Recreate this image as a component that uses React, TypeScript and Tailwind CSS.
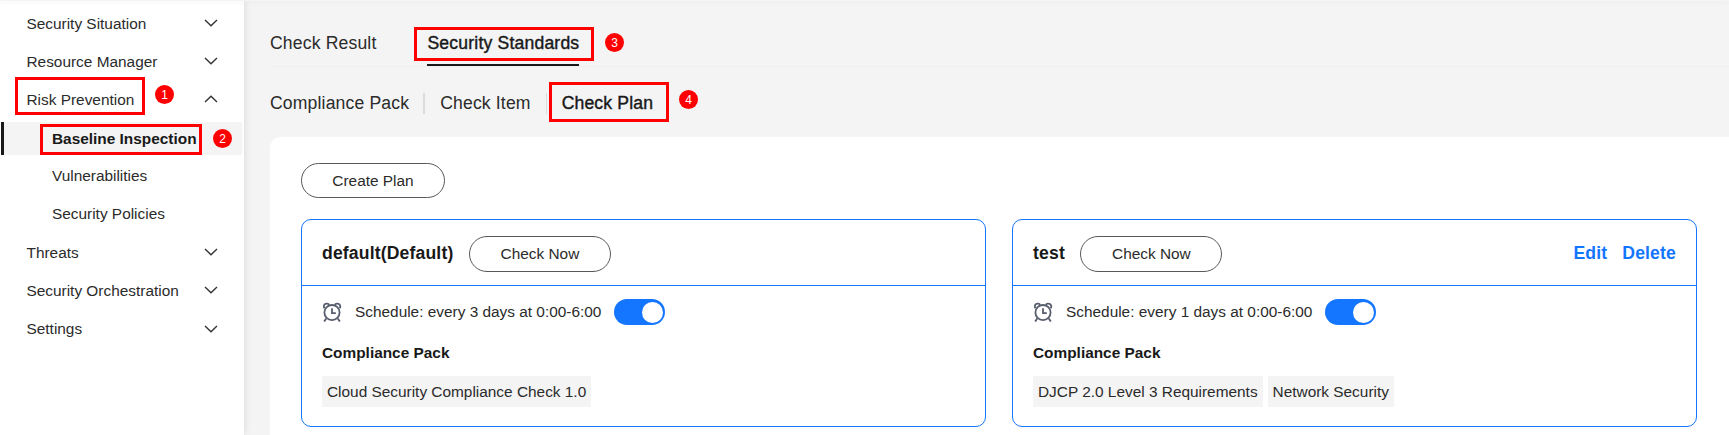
import clsx from "clsx";

type MenuItem = {
  label: string;
  open?: boolean;
  children?: string[];
};

type Plan = {
  name: string;
  schedule: string;
  packs: string[];
  editable?: boolean;
};

const menu: MenuItem[] = [
  { label: "Security Situation" },
  { label: "Resource Manager" },
  {
    label: "Risk Prevention",
    open: true,
    children: ["Baseline Inspection", "Vulnerabilities", "Security Policies"],
  },
  { label: "Threats" },
  { label: "Security Orchestration" },
  { label: "Settings" },
];

const plans: Plan[] = [
  {
    name: "default(Default)",
    schedule: "Schedule: every 3 days at 0:00-6:00",
    packs: ["Cloud Security Compliance Check 1.0"],
  },
  {
    name: "test",
    schedule: "Schedule: every 1 days at 0:00-6:00",
    packs: ["DJCP 2.0 Level 3 Requirements", "Network Security"],
    editable: true,
  },
];

function Chevron({ open }: { open?: boolean }) {
  return (
    <svg
      className={clsx("h-[8px] w-[14px]", open && "rotate-180")}
      viewBox="0 0 14 8"
      fill="none"
      stroke="#333"
      strokeWidth="1.4"
    >
      <path d="M1 1l6 5.8L13 1" />
    </svg>
  );
}

function AlarmClock() {
  return (
    <svg
      className="h-[20px] w-[20px]"
      viewBox="0 0 20 20"
      fill="none"
      stroke="#575d6c"
      strokeWidth="1.8"
    >
      <circle cx="10" cy="10.6" r="7.6" />
      <path d="M10 6.2v5h3.8" />
      <path d="M2.4 6.2A2.8 2.8 0 1 1 7.2 2.8" />
      <path d="M17.6 6.2A2.8 2.8 0 1 0 12.8 2.8" />
      <path d="M4.2 16.4l-2 3.2M15.8 16.4l2 3.2" />
    </svg>
  );
}

function Sidebar() {
  return (
    <nav className="z-10 w-[244px] shrink-0 bg-white pt-[3px] text-[15.4px] shadow-[0_0_8px_rgba(0,0,0,0.12)]">
      {menu.map((item) => (
        <div key={item.label}>
          <div className="flex h-[38.2px] items-center justify-between pr-[26px] pl-[26.5px]">
            <span>{item.label}</span>
            <Chevron open={item.open} />
          </div>
          {item.children?.map((child, i) => (
            <div key={child} className="flex h-[38.2px] items-center">
              <div
                className={clsx(
                  "ml-px flex h-[33px] w-[241px] items-center border-l-3 pl-[48px]",
                  i === 0
                    ? "mt-px border-[#191919] bg-[#f4f4f4] font-bold text-[#191919]"
                    : "border-transparent",
                )}
              >
                {child}
              </div>
            </div>
          ))}
        </div>
      ))}
    </nav>
  );
}

function PillButton({
  children,
  className,
}: {
  children: string;
  className: string;
}) {
  return (
    <button
      className={clsx(
        "rounded-full border border-[#595959] text-[15.4px] tracking-normal whitespace-nowrap",
        className,
      )}
    >
      {children}
    </button>
  );
}

function PlanCard({ plan }: { plan: Plan }) {
  return (
    <section className="h-[208px] w-[685px] rounded-[10px] border border-[#1476ff]">
      <header className="flex h-[66px] items-center border-b border-[#1476ff] px-[20px] pt-px text-[17.6px] font-bold tracking-[0.15px] text-[#191919]">
        <h2 className="mr-[15.5px]">{plan.name}</h2>
        <div className="mt-[2px] flex font-normal text-[#2b2b2b]">
          <PillButton className="h-[36px] w-[142px]">Check Now</PillButton>
        </div>
        {plan.editable && (
          <div className="ml-auto flex gap-[15px] text-[#1476ff]">
            <a>Edit</a>
            <a>Delete</a>
          </div>
        )}
      </header>
      <div className="px-[20px] pt-[13px] text-[15.4px] tracking-normal">
        <div className="flex h-[26px] items-center">
          <AlarmClock />
          <span className="ml-[13px]">{plan.schedule}</span>
          <span className="ml-[13px] flex h-[26px] w-[51px] items-center justify-end rounded-full bg-[#1476ff] pr-[2px]">
            <span className="h-[21px] w-[21px] rounded-full bg-white" />
          </span>
        </div>
        <h3 className="mt-[16px] leading-[24px] font-bold text-[#191919]">
          Compliance Pack
        </h3>
        <div className="mt-[11px] flex gap-[5px]">
          {plan.packs.map((pack) => (
            <span
              key={pack}
              className="flex h-[31px] items-center bg-[#f4f4f4] px-[5px] whitespace-nowrap"
            >
              {pack}
            </span>
          ))}
        </div>
      </div>
    </section>
  );
}

function Step({ n, className }: { n: number; className: string }) {
  return (
    <span
      className={clsx(
        "absolute z-20 flex h-[19px] w-[19px] items-center justify-center rounded-full bg-[#fe0000] text-[12px] leading-none text-white",
        className,
      )}
    >
      {n}
    </span>
  );
}

function Outline({ className }: { className: string }) {
  return (
    <span
      className={clsx("absolute z-20 border-3 border-[#fe0000]", className)}
    />
  );
}

export default function App() {
  return (
    <div className="relative flex h-[435px] w-[1729px] flex-col overflow-hidden bg-[#f4f4f4] font-['Liberation_Sans',Arial,sans-serif] text-[#2b2b2b]">
      <div className="z-20 h-px shrink-0 bg-[#f4f4f4] shadow-[0_1px_5px_rgba(0,0,0,0.12)]" />
      <div className="flex flex-1">
        <Sidebar />
        <main className="flex flex-1 flex-col pl-[26px] text-[17.6px] tracking-[0.15px]">
          <div className="flex h-[66px] items-end gap-[51px] border-b border-[#eeeeee]">
            <span className="h-[36px]">Check Result</span>
            <span className="h-[36px] border-b-2 border-[#191919] tracking-[0.18px] text-[#191919] [-webkit-text-stroke:0.4px]">
              Security Standards
            </span>
          </div>
          <div className="flex h-[70px] items-center pt-[3px]">
            <span>Compliance Pack</span>
            <span className="mr-[15px] ml-[14px] h-[21px] w-[2px] bg-[#dcdcdc]" />
            <span>Check Item</span>
            <span className="mr-[15px] ml-[15px] h-[21px] w-px bg-[#dcdcdc]" />
            <span className="text-[#191919] [-webkit-text-stroke:0.4px]">
              Check Plan
            </span>
          </div>
          <div className="flex-1 rounded-tl-[10px] bg-white pt-[26px] pl-[31px]">
            <div className="flex h-[56px] items-start">
              <PillButton className="h-[35px] w-[144px]">
                Create Plan
              </PillButton>
            </div>
            <div className="flex gap-[26px]">
              {plans.map((plan) => (
                <PlanCard key={plan.name} plan={plan} />
              ))}
            </div>
          </div>
        </main>
      </div>

      <Outline className="top-[77px] left-[15px] h-[38px] w-[130px]" />
      <Step n={1} className="top-[85px] left-[155px]" />
      <Outline className="top-[124px] left-[40px] h-[31px] w-[162px]" />
      <Step n={2} className="top-[129px] left-[213px]" />
      <Outline className="top-[27px] left-[414px] h-[34px] w-[180px]" />
      <Step n={3} className="top-[33px] left-[605px]" />
      <Outline className="top-[82px] left-[549px] h-[40px] w-[120px]" />
      <Step n={4} className="top-[90px] left-[679px]" />
    </div>
  );
}
